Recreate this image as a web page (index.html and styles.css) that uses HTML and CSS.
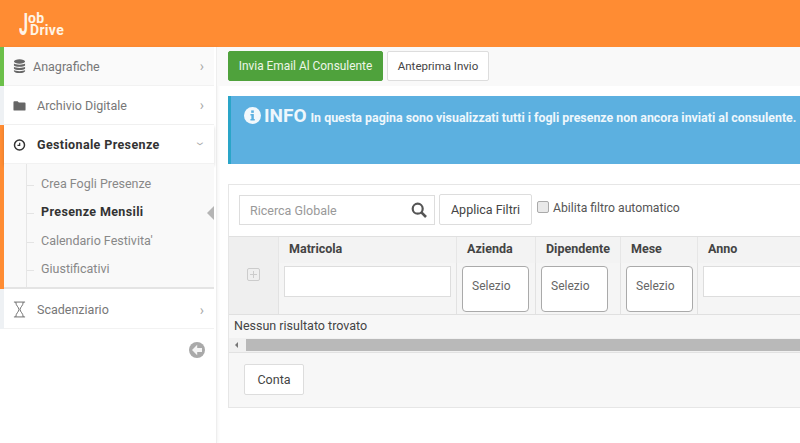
FILE: index.html
```html
<!DOCTYPE html>
<html lang="en">
<head>
  <meta charset="UTF-8">
  <title>Job Drive</title>
  <link rel="stylesheet" href="styles.css">
</head>
<body>
  <header class="topbar">
    <div class="logo"><span class="logo-j">J</span><span class="logo-words"><span>ob</span><span>Drive</span></span></div>
  </header>
  <div class="layout">
    <aside class="sidebar">
      <div class="menu-item mark-green">
        <div class="menu-link shaded">
          <svg class="menu-icon" viewBox="0 0 14 16"><g fill="#666"><ellipse cx="7" cy="2.600" rx="6" ry="2.400"/><path d="M1 4.800c1.200 1.600 10.800 1.600 12 0v2.200c-1.200 1.800-10.800 1.800-12 0z"/><path d="M1 8.300c1.200 1.600 10.800 1.600 12 0v2.200c-1.200 1.800-10.800 1.800-12 0z"/><path d="M1 11.800c1.200 1.600 10.800 1.600 12 0v1.200c-1.200 2.700-10.800 2.700-12 0z"/></g></svg>
          <span class="menu-label">Anagrafiche</span>
          <span class="chev">›</span>
        </div>
      </div>
      <div class="menu-item mark-none">
        <div class="menu-link">
          <svg class="menu-icon" viewBox="0 0 14 16"><path fill="#666" d="M0.500 4.500a1 1 0 0 1 1-1h3.500l1.300 1.400h6.200a1 1 0 0 1 1 1v6.600a1 1 0 0 1-1 1h-11a1 1 0 0 1-1-1z"/></svg>
          <span class="menu-label wide">Archivio Digitale</span>
          <span class="chev">›</span>
        </div>
      </div>
      <div class="menu-item mark-orange">
        <div class="menu-link open">
          <svg class="menu-icon" viewBox="0 0 14 16"><circle cx="7" cy="8.500" r="5.400" fill="none" stroke="#333" stroke-width="1.600"/><path d="M7.200 6v2.900H4.800" fill="none" stroke="#333" stroke-width="1.300"/></svg>
          <span class="menu-label wide">Gestionale Presenze</span>
          <span class="chev down">›</span>
        </div>
        <ul class="submenu">
          <li>Crea Fogli Presenze</li>
          <li class="current">Presenze Mensili</li>
          <li>Calendario Festivita'</li>
          <li>Giustificativi</li>
        </ul>
      </div>
      <div class="menu-item mark-none">
        <div class="menu-link last">
          <svg class="menu-icon hourglass" viewBox="0 0 14 18"><path fill="none" stroke="#666" stroke-width="1" d="M1 1h12M1 17h12M3 1c0 4 3.400 5.500 3.400 8S3 13 3 17M11 1c0 4-3.400 5.500-3.400 8S11 13 11 17"/></svg>
          <span class="menu-label wide">Scadenziario</span>
          <span class="chev">›</span>
        </div>
      </div>
      <div class="collapse-row">
        <svg class="collapse" viewBox="0 0 16 16"><circle cx="8" cy="8" r="8" fill="#a9a9a9"/><path d="M8.200 2.800 3 8l5.200 5.200V10h4.800V6H8.200z" fill="#f4f4f4"/></svg>
      </div>
    </aside>
    <main class="content">
      <div class="toolbar">
        <button class="btn btn-green">Invia Email Al Consulente</button>
        <button class="btn btn-preview">Anteprima Invio</button>
      </div>
      <div class="info">
        <svg class="info-icon" viewBox="0 0 18 18"><circle cx="9" cy="9" r="9" fill="#f2f8fc"/><rect x="7.600" y="3.600" width="2.800" height="2.600" fill="#5cb0e0"/><path d="M6.800 7.400h3.600v5.400h1v1.600H6.800v-1.600h1V9H6.800z" fill="#5cb0e0"/></svg>
        <strong class="info-title">INFO</strong>
        <span class="info-text">In questa pagina sono visualizzati tutti i fogli presenze non ancora inviati al consulente.</span>
      </div>
      <section class="panel">
        <div class="filters">
          <div class="search">
            <span>Ricerca Globale</span>
            <svg class="search-icon" viewBox="0 0 16 16"><circle cx="6.700" cy="6.700" r="5" fill="none" stroke="#555" stroke-width="2.200"/><path d="M10.400 10.400 15 15" stroke="#555" stroke-width="2.600"/></svg>
          </div>
          <button class="btn btn-filter">Applica Filtri</button>
          <label class="auto"><span class="check"></span>Abilita filtro automatico</label>
        </div>
        <div class="grid">
          <div class="head side"></div>
          <div class="head">Matricola</div>
          <div class="head">Azienda</div>
          <div class="head">Dipendente</div>
          <div class="head">Mese</div>
          <div class="head">Anno</div>
          <div class="cell side"><span class="expand"></span></div>
          <div class="cell"><div class="field"></div></div>
          <div class="cell"><div class="select">Selezio</div></div>
          <div class="cell"><div class="select">Selezio</div></div>
          <div class="cell"><div class="select">Selezio</div></div>
          <div class="cell"><div class="field"></div></div>
        </div>
        <div class="empty">Nessun risultato trovato</div>
        <div class="scroll"><span class="arrow"></span><span class="thumb"></span></div>
        <div class="panel-foot"><button class="btn btn-count">Conta</button></div>
      </section>
    </main>
  </div>
</body>
</html>
```

FILE: styles.css
```css
html, body {
  height: 100%;
}
body {
  margin: 0;
  background: #fff;
  color: #555;
  font-family: Roboto, "Liberation Sans", sans-serif;
  font-size: 12.500px;
  overflow: hidden;
}
.topbar {
  height: 47px;
  background: #ff8c33;
  display: flex;
  align-items: flex-start;
  padding: 12px 0 0 19px;
  box-sizing: border-box;
}
.logo {
  display: flex;
  color: #fff4e6;
  font-weight: 700;
}
.logo-j {
  font-size: 31px;
  line-height: 26px;
  width: 9px;
  transform: scaleX(0.52);
  transform-origin: left center;
}
.logo-words {
  display: flex;
  flex-direction: column;
  font-size: 14px;
  line-height: 12px;
  letter-spacing: 0.3px;
  padding-top: 0;
}
.logo-words span:last-child {
  margin-left: 2px;
}
.layout {
  display: flex;
  height: 396px;
}
.sidebar {
  width: 217px;
  flex: none;
  background: #fff;
  border-right: 1px solid #eee;
  box-sizing: border-box;
  box-shadow: 1px 0 3px rgba(0, 0, 0, 0.05);
}
.menu-item {
  border-left: 4px solid #e8edf0;
  margin-right: 2px;
}
.mark-green { border-left-color: #6cc04a; }
.mark-orange { border-left-color: #ff8c33; }
.mark-none { border-left-color: #eef1f4; }
.menu-link {
  height: 39px;
  display: flex;
  align-items: center;
  padding-left: 9px;
  padding-right: 10px;
  box-sizing: border-box;
  background: #fff;
  border-bottom: 1px solid #f2f2f2;
  color: #777;
}
.menu-link.shaded {
  background: #fafafa;
}
.menu-link.open {
  color: #333;
  font-weight: 700;
  letter-spacing: 0.37px;
  box-shadow: 0 2px 3px rgba(0, 0, 0, 0.16);
  position: relative;
}
.menu-link.last {
  height: 40px;
  padding-top: 2px;
}
.menu-icon {
  width: 13px;
  height: 15px;
  flex: none;
}
.menu-icon.hourglass {
  height: 17px;
}
.menu-label {
  margin-left: 7px;
  flex: 1;
}
.menu-label.wide {
  margin-left: 11px;
}
.chev {
  color: #aaa;
  font-size: 14px;
  line-height: 14px;
  font-weight: 400;
}
.chev.down {
  transform: rotate(90deg);
}
.submenu {
  list-style: none;
  margin: 0;
  padding: 6px 0 0 0;
  background: #f9f9f9;
  border-bottom: 2px solid #e4e4e4;
  color: #888;
  position: relative;
  height: 125px;
  box-sizing: border-box;
}
.submenu::before {
  content: "";
  position: absolute;
  left: 22px;
  top: 0;
  bottom: 0;
  border-left: 1px solid #e6e6e6;
}
.submenu li {
  height: 28.300px;
  line-height: 28px;
  padding-left: 37px;
  position: relative;
}
.submenu li::before {
  content: "";
  position: absolute;
  left: 23px;
  top: 15px;
  width: 7px;
  border-top: 1px solid #e4e4e4;
}
.submenu li.current {
  color: #333;
  font-weight: 700;
  letter-spacing: 0.37px;
}
.submenu li.current::after {
  content: "";
  position: absolute;
  right: 0;
  top: 8px;
  border: 7px solid transparent;
  border-left: 0;
  border-right-color: #b5b5b5;
}
.collapse-row {
  display: flex;
  justify-content: flex-end;
  padding: 13px 11px 0 0;
}
.collapse {
  width: 16px;
  height: 16px;
  display: block;
}
.content {
  flex: 1;
  min-width: 0;
  overflow: hidden;
}
.toolbar {
  height: 39px;
  padding: 4px 0 0 11px;
  box-sizing: border-box;
  background: #f9f9f9;
  display: flex;
  gap: 4px;
  align-items: flex-start;
}
.btn {
  font: inherit;
  height: 30px;
  padding: 0 10px;
  background: #fff;
  color: #444;
  border: 1px solid #ddd;
  border-radius: 2px;
}
.btn-green {
  background: #4fa23c;
  border-color: #4fa23c;
  color: #eef6e8;
  width: 155px;
  padding: 0;
  font-size: 11.900px;
}
.btn-preview {
  width: 102px;
  padding: 0;
  font-size: 11.500px;
}
.info {
  margin: 10px 0 0 11px;
  width: 600px;
  height: 68px;
  box-sizing: border-box;
  background: #5cb0e0;
  border-left: 3px solid #2aa5c8;
  color: #eef7fc;
  padding: 10px 0 0 13px;
  display: flex;
  align-items: flex-start;
  white-space: nowrap;
}
.info-icon {
  width: 17px;
  height: 17px;
  flex: none;
  margin-top: 1px;
}
.info-title {
  font-size: 19px;
  line-height: 20px;
  margin-left: 3px;
}
.info-text {
  font-weight: 700;
  line-height: 23px;
  margin-left: 4px;
  font-size: 12.400px;
}
.panel {
  margin: 20px 0 0 11px;
  width: 640px;
  height: 224px;
  box-sizing: border-box;
  border: 1px solid #e6e6e6;
  background: #f7f7f7;
}
.filters {
  height: 51px;
  background: #fff;
  display: flex;
  align-items: flex-start;
  padding: 10px 0 0 10px;
  box-sizing: border-box;
}
.search {
  width: 196px;
  height: 30px;
  box-sizing: border-box;
  border: 1px solid #ddd;
  display: flex;
  align-items: center;
  justify-content: space-between;
  padding: 0 7px 0 10px;
  color: #999;
}
.search-icon {
  width: 16px;
  height: 16px;
}
.btn-filter {
  margin: -1px 0 0 4px;
  width: 93px;
  height: 31px;
  padding: 0;
}
.auto {
  display: flex;
  align-items: center;
  color: #555;
  margin-left: 5px;
  height: 26px;
  font-size: 12.200px;
}
.check {
  width: 10px;
  height: 10px;
  border: 1px solid #aaa;
  border-radius: 2px;
  background: #e9e9e9;
  margin: -3px 4px 0 0;
}
.grid {
  display: grid;
  grid-template-columns: 49px 178px 79px 85px 77px 1fr;
  grid-template-rows: 26px 51px;
  background: #f5f5f5;
  border-top: 1px solid #e0e0e0;
  border-bottom: 1px solid #e0e0e0;
}
.head {
  font-weight: 700;
  color: #444;
  padding-left: 10px;
  line-height: 24px;
  border-left: 1px solid #e6e6e6;
  background: #f3f3f3;
}
.head.side, .cell.side {
  border-left: 0;
  background: #efefef;
  padding: 0;
}
.cell {
  border-left: 1px solid #e2e2e2;
  padding: 3px 0 0 5px;
  box-sizing: border-box;
}
.cell.side {
  display: flex;
  justify-content: center;
  padding-top: 5px;
}
.expand {
  width: 11px;
  height: 11px;
  border: 1px solid #ccc;
  border-radius: 2px;
  background: linear-gradient(#ccc, #ccc) center / 7px 1px no-repeat, linear-gradient(#ccc, #ccc) center / 1px 7px no-repeat;
}
.field {
  width: 167px;
  height: 31px;
  box-sizing: border-box;
  border: 1px solid #ddd;
  background: #fff;
}
.select {
  width: 67px;
  height: 46px;
  box-sizing: border-box;
  border: 1px solid #aaa;
  border-radius: 4px;
  background: #fff;
  color: #666;
  line-height: 38px;
  padding-left: 9px;
  font-size: 12px;
}
.empty {
  height: 23px;
  line-height: 21px;
  padding-left: 5px;
  color: #444;
}
.scroll {
  height: 14px;
  display: flex;
  align-items: center;
  background: #f1f1f1;
  border-bottom: 1px solid #e2e2e2;
}
.arrow {
  margin-left: 6px;
  border: 3px solid transparent;
  border-left: 0;
  border-right: 3px solid #777;
}
.thumb {
  margin-left: 8px;
  flex: 1;
  height: 12px;
  background: #b9b9b9;
}
.panel-foot {
  padding: 11px 0 0 15px;
}
.btn-count {
  width: 60px;
  height: 31px;
  padding: 0;
}
```
